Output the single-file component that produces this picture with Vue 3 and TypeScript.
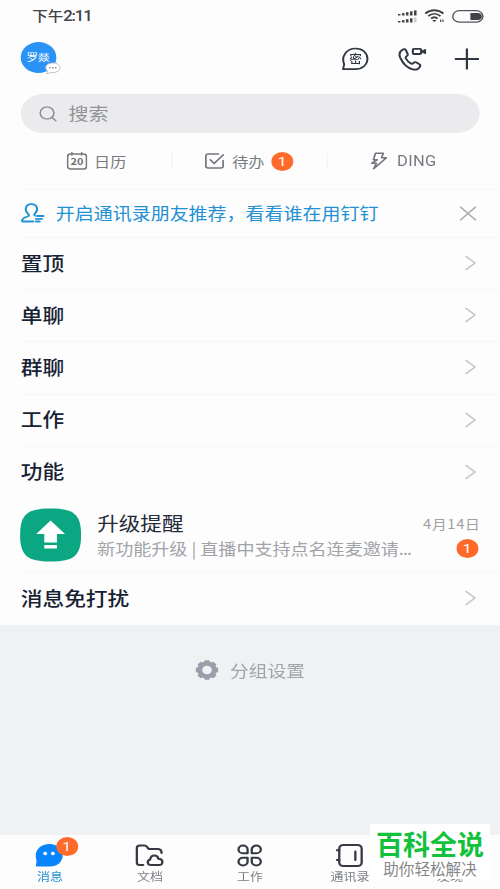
<script setup lang="ts">
interface Tab {
  id: string
  label: string
  active?: boolean
}

const groups: string[] = ['置顶', '单聊', '群聊', '工作', '功能']

const tabs: Tab[] = [
  { id: 'message', label: '消息', active: true },
  { id: 'docs', label: '文档' },
  { id: 'work', label: '工作' },
  { id: 'contacts', label: '通讯录' },
  { id: 'discover', label: '发现' },
]

const signalBars: number[] = [0, 1, 2, 3, 4]
</script>

<template>
  <div class="screen">
    <div class="phone">
      <div class="status">
        <span class="clock">下午<b>2:11</b></span>
        <div class="indicators">
          <svg class="signal" width="17" height="13" viewBox="0 0 17 13">
            <g fill="#404347">
              <rect v-for="i in signalBars" :key="i" :x="i * 3.5" :y="4 - i * 0.9" width="2.2" :height="1.5 + i * 0.9" />
              <rect v-for="i in signalBars" :key="'b' + i" :x="i * 3.5" :y="11 - i * 0.9" width="2.2" :height="1.5 + i * 0.9" :opacity="i === 4 ? 0.25 : 1" />
            </g>
          </svg>
          <svg class="wifi" width="18" height="14" viewBox="0 0 18 14" fill="none" stroke="#404347" stroke-width="1.8">
            <path d="M.8 4.6C5.3.1 12 .1 16.600 4.600M3.400 7.200C6.600 4 10.800 4 14 7.200M5.900 9.600C7.700 7.900 9.700 7.900 11.500 9.600" />
            <path d="M6.800 11L8.700 13L10.600 11Z" fill="#404347" stroke="none" />
            <path d="M14.200 10.500V13M16.200 10.500V13" stroke-width="1" />
          </svg>
          <svg class="battery" width="28" height="13" viewBox="0 0 28 13">
            <rect x=".7" y=".7" width="26.200" height="11.400" rx="5.700" fill="none" stroke="#505357" stroke-width="1.200" />
            <path d="M16 3h6.500a3.300 3.300 0 0 1 0 7H16z" fill="#404347" />
          </svg>
        </div>
      </div>

      <header class="header">
        <div class="avatar">
          罗燚
          <svg class="bubble" width="14" height="13" viewBox="0 0 14 13">
            <path d="M7 1C3.300 1 .8 3 .8 5.700c0 1.500.6 2.600 1.700 3.400L1.700 12l3-1.600c4.500.8 8.500-1.200 8.500-4.700C13.200 3 10.700 1 7 1Z" fill="#fff" stroke="#b9bcc0" stroke-width=".8" />
            <g fill="#777"><circle cx="4.500" cy="5.800" r=".7" /><circle cx="7" cy="5.800" r=".7" /><circle cx="9.500" cy="5.800" r=".7" /></g>
          </svg>
        </div>
        <div class="actions">
          <span class="secret">
            <svg width="24" height="24" viewBox="0 0 24 24" fill="none" stroke="#303642" stroke-width="1.700" stroke-linejoin="round">
              <path d="M1.300 22.200L2.300 17.200C-.3 10.500 3.300 1.500 12.200 1.500C18.400 1.500 22.500 6 22.500 11.800C22.500 17.800 18 22.200 12 22.200Z" />
            </svg>
            <i>密</i>
          </span>
          <svg class="call" width="25" height="24" viewBox="0 0 25 24" fill="none" stroke="#303642" stroke-width="1.800" stroke-linejoin="round" stroke-linecap="round">
            <path d="M4.300 2.500C1.500 4.300.7 7 2 10.600C4.300 16.500 8.300 21 13 22.400C15.700 23.200 18 22.100 19.200 19.600C19.800 18.300 19.400 17.500 18.400 16.900L16.200 15.500C15 14.800 14.200 15.100 13.400 16.100C12.700 17 12 17 11 16.300C9.300 15.100 7.900 13.500 7 11.500C6.500 10.400 6.700 9.800 7.600 9.200C8.700 8.400 8.900 7.600 8.300 6.400L7 3.400C6.400 2 5.500 1.700 4.300 2.500Z" />
            <rect x="13" y="1.800" width="7.200" height="5.200" rx="1" />
            <path d="M21.200 4L24 2.400V6.600L21.200 5.200Z" fill="#303642" stroke-width="1" />
          </svg>
          <svg class="plus" width="22" height="22" viewBox="0 0 22 22" stroke="#303642" stroke-width="1.900">
            <path d="M11 .5V21.500M.5 11H21.500" />
          </svg>
        </div>
      </header>

      <div class="search">
        <svg width="16" height="16" viewBox="0 0 16 16" fill="none" stroke="#8d8f94" stroke-width="1.400" stroke-linecap="round">
          <circle cx="6.900" cy="6.900" r="6" /><path d="M11.300 11.500L14.500 14.800" />
        </svg>
        <span>搜索</span>
      </div>

      <nav class="quick">
        <div class="quick-item">
          <svg width="18" height="18" viewBox="0 0 18 18" fill="none" stroke="#74777d" stroke-width="1.400" stroke-linecap="round">
            <rect x=".8" y="2" width="16.400" height="15" rx="2.500" /><path d="M4.500 .8V3M13 .8V3" />
            <text x="9" y="13" text-anchor="middle" font-size="9.500" font-weight="700" fill="#6c6f75" stroke="none">20</text>
          </svg>
          <span>日历</span>
        </div>
        <div class="quick-item todo">
          <svg width="18" height="16" viewBox="0 0 18 16" fill="none" stroke="#74777d" stroke-width="1.500" stroke-linecap="round" stroke-linejoin="round">
            <path d="M12 1H3Q1 1 1 3V13Q1 15 3 15H14Q16 15 16 13V7.500M4.800 6.800L8.200 10.500L16.200 1.800" />
          </svg>
          <span>待办</span>
          <em class="badge">1</em>
        </div>
        <div class="quick-item">
          <svg width="15" height="18" viewBox="0 0 15 18" fill="none" stroke="#74777d" stroke-width="1.500" stroke-linejoin="round">
            <path d="M4.500 1.200H11.300L9.800 5.800H14L3 16.800L5.300 11.300H1.200L6 7.800H2.700Z" />
          </svg>
          <span class="ding">DING</span>
        </div>
      </nav>

      <div class="banner">
        <svg width="21" height="20" viewBox="0 0 21 20" fill="none" stroke="#2492d6" stroke-width="1.800" stroke-linecap="round" stroke-linejoin="round">
          <path d="M11 18.500H1.200C.8 15.500 3 14.500 6 13.500C7.500 13 7.400 11.800 6.400 10.800C2.800 7 4.300 1.200 9.300 1.200C14.500 1.200 15.700 7 12.500 10.500C11.500 11.500 11.600 12.300 12.500 12.700M14.300 13H19.800M13.300 15.800H18.500M13.300 18.500H16.500" />
        </svg>
        <span>开启通讯录朋友推荐，看看谁在用钉钉</span>
        <svg class="close" width="16" height="16" viewBox="0 0 16 16" stroke="#a8abb0" stroke-width="1.500">
          <path d="M1.200 1.700L14.800 15.300M14.800 1.700L1.200 15.300" />
        </svg>
      </div>

      <ul class="groups">
        <li v-for="name in groups" :key="name" class="group">
          <span>{{ name }}</span>
          <svg class="chevron" width="10" height="16" viewBox="0 0 10 16"><path d="M.8 1L9 8L.8 15" /></svg>
        </li>
      </ul>

      <article class="chat">
        <svg class="chat-icon" width="54" height="54" viewBox="0 0 54 54">
          <path d="M27 .5C47 .5 53.500 6 53.500 27S47 53.500 27 53.500S.5 48 .5 27S7 .5 27 .5Z" fill="#0ba783" />
          <path d="M27 12.500L39.500 26H32.500V34.500H21.500V26H14.500ZM21.500 37H32.500V40.500H21.500Z" fill="#fff" />
        </svg>
        <div class="chat-body">
          <h3>升级提醒</h3>
          <p>新功能升级 | 直播中支持点名连麦邀请<span class="dots">...</span></p>
        </div>
        <div class="chat-meta">
          <time>4月14日</time>
          <em class="badge">1</em>
        </div>
      </article>

      <div class="group muted">
        <span>消息免打扰</span>
        <svg class="chevron" width="10" height="16" viewBox="0 0 10 16"><path d="M.8 1L9 8L.8 15" /></svg>
      </div>

      <div class="settings">
        <svg width="20" height="20" viewBox="-10 -10 20 20">
          <circle r="6.300" fill="none" stroke="#9a9fa9" stroke-width="4.200" />
          <g fill="#9a9fa9">
            <rect v-for="i in 8" :key="i" x="-2.400" y="-9.800" width="4.800" height="4" rx="1.200" :transform="`rotate(${i * 45})`" />
          </g>
        </svg>
        <span>分组设置</span>
      </div>

      <footer class="tabs">
        <div v-for="tab in tabs" :key="tab.id" class="tab" :class="{ active: tab.active }">
          <svg width="26" height="26" viewBox="0 0 26 26" fill="none" stroke="#343943" stroke-width="2" stroke-linecap="round" stroke-linejoin="round">
            <g v-if="tab.id === 'message'" stroke="none">
              <path d="M1.200 24.500L1.800 18.500C-1 10 4 2 13 2C20 2 24.500 7 24.500 13.200C24.500 20 19.500 24.700 13 24.500Z" fill="#0885fb" />
              <circle cx="9.300" cy="11.500" r="1.700" fill="#fff" /><circle cx="16" cy="11.500" r="1.700" fill="#fff" />
            </g>
            <g v-else-if="tab.id === 'docs'">
              <path d="M7.500 23H4.500Q2 23 2 20.500V6Q2 3.500 4.500 3.500H8.500Q10 3.500 11 5L12.200 7H20Q23.500 7 23.500 11" />
              <path d="M14.300 23C11 23 10.500 18.300 13.500 17.700C14.300 12 20 12.500 20.700 16.800C25.300 16.800 25.200 23 21.500 23Z" />
            </g>
            <g v-else-if="tab.id === 'work'">
              <path d="M7.300 3.500A4 4 0 0 1 11.300 7.500V11.300H7.300A3.900 3.900 0 0 1 7.300 3.500Z" />
              <path d="M18.900 3.500A4 4 0 0 0 14.900 7.500V11.300H18.900A3.900 3.900 0 0 0 18.900 3.500Z" />
              <path d="M7.300 23.500A4 4 0 0 0 11.300 19.500V15.700H7.300A3.900 3.900 0 0 0 7.300 23.500Z" />
              <path d="M18.900 23.500A4 4 0 0 1 14.900 19.500V15.700H18.900A3.900 3.900 0 0 1 18.900 23.500Z" />
            </g>
            <g v-else-if="tab.id === 'contacts'">
              <rect x="4" y="3" width="19.500" height="21" rx="3.500" /><path d="M18 9.500V18M2 8.300H4M2 18H4" />
            </g>
          </svg>
          <span>{{ tab.label }}</span>
          <em v-if="tab.active" class="badge tab-badge">1</em>
        </div>
      </footer>
    </div>

    <div class="stamp">
      <strong>百科全说</strong>
      <small>助你轻松解决</small>
    </div>
  </div>
</template>

<style>
body {
  overflow: hidden;
}
</style>

<style scoped>
.screen {
  position: relative;
  width: 500px;
  height: 889px;
  overflow: hidden;
  background: #f0f1f3;
  font-family: 'Noto Sans CJK SC', 'Noto Sans', sans-serif;
}
/* The phone layout is authored at 434.78px and widened to fill the screen. */
.phone {
  display: flex;
  flex-direction: column;
  width: 434.78px;
  height: 889px;
  transform: scaleX(1.15);
  transform-origin: 0 0;
}
.phone > * {
  box-sizing: border-box;
  flex-shrink: 0;
}
svg {
  display: block;
  flex-shrink: 0;
}
em, i {
  font-style: normal;
}
.status {
  display: flex;
  align-items: center;
  justify-content: space-between;
  height: 32px;
  padding: 0 14px 0 28px;
  background: #fdfdfd;
}
.clock {
  font-size: 13.5px;
  font-weight: 500;
  line-height: 30px;
  padding-bottom: 2px;
  color: #404347;
}
.clock b {
  font: 500 14.5px Roboto, sans-serif;
  letter-spacing: -1px;
}
.indicators {
  display: flex;
  align-items: center;
  gap: 6px;
}
.header {
  display: flex;
  align-items: flex-start;
  justify-content: space-between;
  height: 62px;
  padding: 10px 17.5px 0 17.5px;
  background: #fdfdfd;
}
.avatar {
  position: relative;
  width: 31px;
  height: 31px;
  border-radius: 50%;
  background: #2c93f6;
  color: #fff;
  font-size: 10px;
  line-height: 30px;
  text-align: center;
}
.bubble {
  position: absolute;
  right: -4px;
  bottom: -2px;
}
.actions {
  display: flex;
  align-items: center;
  height: 34px;
}
.secret {
  position: relative;
  margin-right: 24.500px;
}
.secret i {
  position: absolute;
  left: 6.5px;
  top: 4px;
  font-size: 11px;
  font-weight: 500;
  line-height: 15px;
  color: #303642;
}
.call {
  margin-right: 24.500px;
}
.search {
  display: flex;
  align-items: center;
  gap: 10px;
  height: 39px;
  padding: 0 33.5px;
  position: relative;
  color: #919398;
  font-size: 17.4px;
  line-height: 36px;
  background: #fdfdfd;
  z-index: 0;
}
.search span {
  padding-bottom: 1.5px;
}
.search::before {
  content: '';
  position: absolute;
  inset: 0 17.5px;
  border-radius: 20px;
  background: #ebebed;
  z-index: -1;
}
.quick {
  display: flex;
  height: 56px;
  padding: 0 17.5px;
  background: #fdfdfd;
}
.quick-item {
  display: flex;
  flex: 1;
  align-items: center;
  justify-content: center;
  gap: 6px;
  position: relative;
  color: #777a80;
  font-size: 14px;
}
.todo {
  padding-right: 2px;
}
.quick-item + .quick-item::before {
  content: '';
  position: absolute;
  left: -1px;
  top: 20px;
  height: 16px;
  border-left: 1px solid #f0f1f3;
}
.ding {
  padding-left: 2px;
  font-family: Roboto, sans-serif;
  font-size: 14.3px;
  letter-spacing: 0.3px;
}
.badge {
  width: 19px;
  height: 19px;
  border-radius: 50%;
  background: #ff6a2b;
  color: #fff;
  font: 400 13.5px/19px Roboto, sans-serif;
  text-align: center;
}
.banner {
  display: flex;
  align-items: center;
  height: 48px;
  padding: 0 20px 0 18px;
  color: #2490d4;
  font-size: 16.5px;
  background: linear-gradient(#f7f7f8, #f7f7f8) 17.5px 0 / 100% 1px no-repeat #fdfdfd;
}
.banner > span {
  margin-left: 9.5px;
}
.close {
  margin-left: auto;
}
.groups {
  margin: 0;
  padding: 0;
  list-style: none;
}
.group {
  display: flex;
  box-sizing: border-box;
  align-items: center;
  justify-content: space-between;
  height: 52.2px;
  padding: 0 21px 0 18px;
  color: #172234;
  font-size: 18.900px;
  font-weight: 500;
  background: linear-gradient(#f6f6f7, #f6f6f7) 17.5px 0 / 100% 1px no-repeat #fdfdfd;
}
.group span {
  padding-bottom: 2px;
}
.chevron path {
  fill: none;
  stroke: #c2c4c8;
  stroke-width: 1.5;
}
.chat {
  display: flex;
  height: 74px;
  padding: 10.5px 17.5px 0 17px;
  background: #fdfdfd;
}
.chat-body {
  flex: 1;
  margin-left: 13.500px;
  white-space: nowrap;
}
.chat-body h3 {
  margin: 1px 0 0;
  font-size: 18.8px;
  font-weight: 400;
  line-height: 27px;
  color: #232b38;
}
.chat-body p {
  margin: 0;
  font-size: 15.7px;
  line-height: 26px;
  color: #a1a3a8;
}
.dots {
  letter-spacing: -0.8px;
}
.chat-meta {
  display: flex;
  flex-direction: column;
  align-items: flex-end;
}
.chat-meta time {
  margin-right: -0.5px;
  font-size: 12.8px;
  line-height: 31px;
  letter-spacing: 0.6px;
  color: #9fa1a6;
}
.chat-meta .badge {
  margin: 0 1.5px;
}
.muted {
  height: 53px;
}
.settings {
  display: flex;
  align-items: center;
  justify-content: center;
  gap: 10.5px;
  height: 90px;
  color: #a1a4aa;
  font-size: 16.3px;
}
.tabs {
  display: flex;
  height: 54px;
  margin-top: auto;
  background: #fdfdfd;
}
.tab {
  position: relative;
  display: flex;
  flex: 1;
  flex-direction: column;
  align-items: center;
  padding-top: 7px;
  color: #7d8086;
  font-size: 11.3px;
  line-height: 17px;
}
.tab.active {
  color: #2490d4;
}
.tab-badge {
  position: absolute;
  left: 48.5px;
  top: 2px;
}
.stamp {
  position: absolute;
  left: 370px;
  top: 824px;
  display: flex;
  flex-direction: column;
  align-items: center;
  width: 120px;
  height: 55px;
  background: #fff;
  white-space: nowrap;
}
.stamp strong {
  font-size: 27px;
  font-weight: 700;
  line-height: 40px;
  color: #12c13c;
}
.stamp small {
  font-size: 15.6px;
  line-height: 16px;
  margin-top: -4px;
  color: #85878a;
}
</style>
